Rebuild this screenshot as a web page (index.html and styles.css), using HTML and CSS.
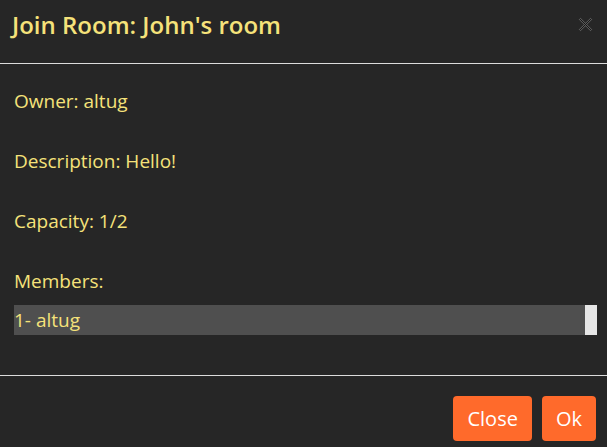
FILE: index.html
```html
<!DOCTYPE html>
<html>
<head>
<meta charset="utf-8">
<link rel="stylesheet" href="styles.css">
</head>
<body>
<div class="modal">
  <div class="modal-header">
    <h5 class="modal-title">Join Room: John's room</h5>
    <button class="btn-close" aria-label="Close">
      <svg width="15" height="15" viewBox="0 0 15 15">
        <path d="M1.5 1.5 L13.5 13.5 M13.5 1.5 L1.5 13.5" stroke="#5c5c5c" stroke-width="2.4" fill="none"/>
        <path d="M1.5 1.5 L13.5 13.5 M13.5 1.5 L1.5 13.5" stroke="#161616" stroke-width="1" fill="none"/>
      </svg>
    </button>
  </div>
  <div class="modal-body">
    <p class="info">Owner: altug</p>
    <p class="info">Description: Hello!</p>
    <p class="info">Capacity: 1/2</p>
    <p class="info members-label">Members:</p>
    <div class="member-list">
      <div class="member">1- altug</div>
      <div class="scroll-thumb"></div>
    </div>
  </div>
  <div class="modal-footer">
    <button class="btn">Close</button>
    <button class="btn">Ok</button>
  </div>
</div>
</body>
</html>
```
FILE: styles.css
```css
* { box-sizing: border-box; }
html, body { margin: 0; padding: 0; }
body {
  background: #262626;
  font-family: "Open Sans", "Noto Sans", sans-serif;
  color: #f5e27a;
  width: 607px;
  height: 447px;
  overflow: hidden;
}
.modal { display: flex; flex-direction: column; height: 447px; }
.modal-header {
  display: flex;
  align-items: center;
  justify-content: space-between;
  padding: 8px 14px 22px 12px;
  border-bottom: 1px solid #dcdcdc;
  height: 64px;
}
.modal-title {
  margin: 0;
  font-size: 24px;
  font-weight: 600;
  line-height: 30px;
}
.btn-close {
  background: none;
  border: none;
  padding: 0;
  display: flex;
  margin-right: 0;
}
.modal-body {
  padding: 25px 10px 0 14px;
  height: 312px;
  border-bottom: 1px solid #dcdcdc;
}
.info {
  margin: 0 0 36px 0;
  font-size: 19px;
  line-height: 24px;
}
.members-label { margin-bottom: 12px; }
.member-list {
  display: flex;
  background: #4f4f4f;
  height: 30px;
  align-items: center;
}
.member { flex: 1; font-size: 19px; line-height: 30px; }
.scroll-thumb { width: 12px; height: 30px; background: #e6e6e6; }
.modal-footer {
  display: flex;
  justify-content: flex-end;
  gap: 10px;
  padding: 20px 11px 0 0;
}
.btn {
  background: #ff6a2b;
  color: #fff;
  border: none;
  border-radius: 4px;
  font-family: inherit;
  font-size: 20px;
  height: 45px;
  padding: 0 14px;
}
```
